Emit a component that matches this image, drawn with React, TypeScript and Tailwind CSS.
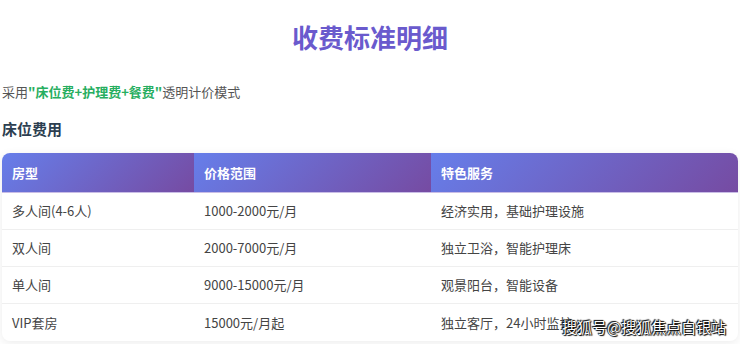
import React from "react";

const rows = [
  ["多人间(4-6人)", "1000-2000元/月", "经济实用，基础护理设施"],
  ["双人间", "2000-7000元/月", "独立卫浴，智能护理床"],
  ["单人间", "9000-15000元/月", "观景阳台，智能设备"],
  ["VIP套房", "15000元/月起", "独立客厅，24小时监护"],
];

const font = { fontFamily: '"Noto Sans CJK SC", "Noto Sans", sans-serif' };

export default function App() {
  return (
    <div className="relative w-[740px] h-[344px] overflow-hidden bg-white px-[2px]" style={font}>
      <h1 className="pt-[21px] text-center text-[26px] leading-[32px] font-bold text-[#6a5acd]">收费标准明细</h1>
      <p className="mt-[29px] text-[13px] leading-[20px] text-[#555]">
        采用<span className="font-bold text-[#27ae60]">"床位费+护理费+餐费"</span>透明计价模式
      </p>
      <h3 className="mt-[16px] text-[15px] leading-[22px] font-bold text-[#2c3e50]">床位费用</h3>
      <div className="mt-[13px] rounded-[8px] overflow-hidden shadow-[0_2px_10px_rgba(0,0,0,0.08)] bg-white">
        <div className="grid grid-cols-[192px_237px_1fr] h-[40px] text-[13px] font-bold text-white border-b border-[#c9bde6]">
          {["房型", "价格范围", "特色服务"].map((h) => (
            <div key={h} className="flex items-center pl-[10px] bg-[linear-gradient(135deg,#667eea,#764ba2)]">{h}</div>
          ))}
        </div>
        {rows.map((r, i) => (
          <div key={i} className={`grid grid-cols-[192px_237px_1fr] h-[37px] text-[13px] text-[#444] ${i < rows.length - 1 ? "border-b border-[#efefef]" : ""}`}>
            {r.map((c, j) => (
              <div key={j} className="flex items-center pl-[10px]">{c}</div>
            ))}
          </div>
        ))}
      </div>
      <div
        className="absolute left-[562px] top-[317px] whitespace-nowrap text-[15px] leading-[20px] text-white"
        style={{ textShadow: "0 0 1px #000, 0 0 1px #000, 1px 1px 1px #000, -1px -1px 1px #000" }}
      >
        搜狐号@搜狐焦点白银站
      </div>
    </div>
  );
}
